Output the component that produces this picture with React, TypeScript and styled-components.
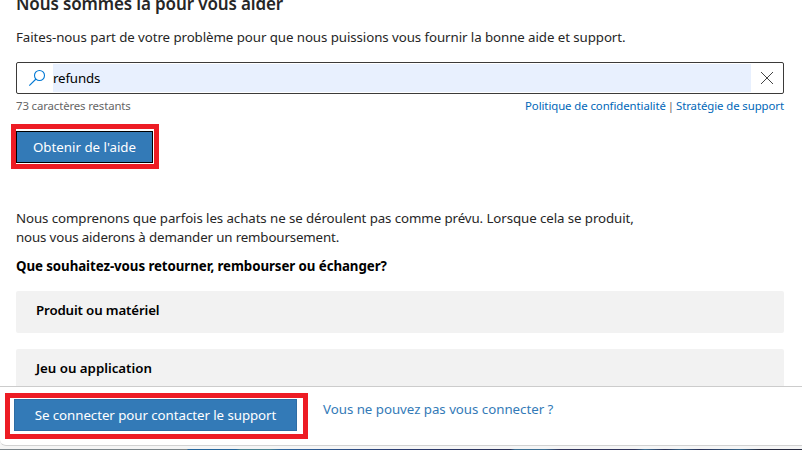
import styled, {createGlobalStyle} from 'styled-components';

const GlobalStyle = createGlobalStyle`
  * {
    box-sizing: border-box;
  }

  body {
    margin: 0;
    background: #fff;
    color: #262626;
    font-family: 'Noto Sans', 'Open Sans', sans-serif;
    font-size: 13.3px;
    overflow: hidden;
  }
`;

const Page = styled.div`
  display: flex;
  flex-direction: column;
  height: 450px;
  overflow: hidden;
  background: #f5f5f5;
`;

const Content = styled.main`
  height: 386px;
  flex: none;
  overflow: hidden;
  padding: 0 18px 0 16px;
  background: #fff;
`;

const Title = styled.h1`
  margin: -8px 0 0;
  height: 24px;
  line-height: 24px;
  font-size: 17px;
  font-weight: 600;
  letter-spacing: -0.13px;
  white-space: nowrap;
`;

const Intro = styled.p`
  margin: 11px 0 15px;
  line-height: 20px;
  letter-spacing: -0.075px;
  white-space: nowrap;
`;

const SearchBox = styled.div`
  display: flex;
  align-items: stretch;
  height: 32px;
  border: 1px solid #3b3a39;
  border-radius: 2px;
`;

const SearchIcon = styled.span`
  display: flex;
  align-items: center;
  width: 36px;
  padding-left: 11px;
`;

const SearchInput = styled.input`
  flex: 1;
  min-width: 0;
  margin: 1px 0;
  padding: 0 0 1px;
  border: 0;
  outline: 0;
  background: #e8f0fe;
  color: #000;
  font: inherit;
  letter-spacing: -0.15px;
`;

const ClearButton = styled.button`
  display: flex;
  align-items: center;
  justify-content: center;
  width: 32px;
  padding: 0;
  border: 0;
  background: none;
`;

const Hint = styled.div`
  display: flex;
  justify-content: space-between;
  height: 24px;
  line-height: 24px;
  font-size: 11.4px;
  letter-spacing: -0.13px;
  color: #666;
  white-space: nowrap;
`;

const HintLinks = styled.span`
  display: flex;
  gap: 2px;
  letter-spacing: -0.085px;
`;

const HintLink = styled.a`
  color: #0067b8;
`;

const Highlight = styled.div<{$inset: string}>`
  width: fit-content;
  padding: ${({$inset}) => $inset};
  border: 5px solid #ed1c24;
  background: #fff;
`;

const Button = styled.button<{$width: number; $focused?: boolean}>`
  display: block;
  width: ${({$width}) => $width}px;
  height: 32px;
  padding: 0;
  border: 1px solid ${({$focused}) => ($focused ? '#000' : '#2e6da4')};
  background: #337ab7;
  color: #fff;
  font: inherit;
  letter-spacing: ${({$focused}) => ($focused ? '0' : '-0.06px')};
  line-height: 28px;
  white-space: nowrap;
`;

const HelpAction = styled.div`
  margin: 6px 0 40px -5px;
`;

const Refunds = styled.p`
  margin: 0;
  line-height: 19px;
  letter-spacing: -0.09px;
  white-space: nowrap;
`;

const RefundsEnd = styled.span`
  letter-spacing: -0.14px;
`;

const Question = styled.h2`
  margin: 9px 0 15px;
  height: 20px;
  line-height: 20px;
  font-size: 13.3px;
  font-weight: 700;
  letter-spacing: -0.075px;
  color: #000;
  white-space: nowrap;
`;

const Choice = styled.div<{$spacing: number}>`
  height: 42px;
  margin-bottom: 16px;
  padding-left: 20px;
  border-radius: 2px;
  background: #f2f2f2;
  color: #000;
  font-weight: 600;
  letter-spacing: ${({$spacing}) => $spacing}px;
  line-height: 38px;
`;

const Footer = styled.footer`
  display: flex;
  align-items: flex-start;
  gap: 15px;
  flex: none;
  height: 60px;
  padding: 6px 0 0 5px;
  border-top: 1px solid #ccc;
  border-bottom: 1px solid #d2d2d2;
  border-bottom-left-radius: 6px;
  background: #fff;
`;

const SignInLink = styled.a`
  margin-top: 6px;
  line-height: 20px;
  letter-spacing: -0.03px;
  color: #337ab7;
  white-space: nowrap;
`;

const Backdrop = styled.div`
  height: 1px;
  margin-top: 3px;
  background: linear-gradient(90deg, #7b858a 0 187px, #24659b 188px 236px, #4b8494 240px 270px, #2f68a0 280px, #2a3a70 400px, #2a3158 510px, #3e6f94 515px 545px, #30345c 560px, #30345c 635px, #3e6f94 645px, #2a3158 665px, #386487 680px, #2a3158 700px, #39668a 740px, #262a40 760px);
`;

const choices = [
  {label: 'Produit ou matériel', spacing: -0.15},
  {label: 'Jeu ou application', spacing: -0.02},
];

const App = () => {
  return (
    <Page>
      <GlobalStyle />
      <Content>
        <Title>Nous sommes là pour vous aider</Title>
        <Intro>Faites-nous part de votre problème pour que nous puissions vous fournir la bonne aide et support.</Intro>
        <SearchBox>
          <SearchIcon>
            <svg width="18" height="18" viewBox="0 0 18 18" fill="none" stroke="#0078d4" strokeWidth="1.1">
              <circle cx="11.5" cy="6.5" r="5" />
              <path d="M8 10 L1.3 16.7" />
            </svg>
          </SearchIcon>
          <SearchInput defaultValue="refunds" />
          <ClearButton>
            <svg width="14" height="14" viewBox="0 0 14 14" fill="none" stroke="#444" strokeWidth="1">
              <path d="M1 1 L13 13 M13 1 L1 13" />
            </svg>
          </ClearButton>
        </SearchBox>
        <Hint>
          <span>73 caractères restants</span>
          <HintLinks>
            <HintLink>Politique de confidentialité</HintLink>
            <span>|</span>
            <HintLink>Stratégie de support</HintLink>
          </HintLinks>
        </Hint>
        <HelpAction>
          <Highlight $inset="2px 1px 1px 0">
            <Button $width={137} $focused>
              {"Obtenir de l'aide"}
            </Button>
          </Highlight>
        </HelpAction>
        <Refunds>
          Nous comprenons que parfois les achats ne se déroulent pas comme prévu. Lorsque cela se produit,
          <br />
          <RefundsEnd>nous vous aiderons à demander un remboursement.</RefundsEnd>
        </Refunds>
        <Question>Que souhaitez-vous retourner, rembourser ou échanger?</Question>
        {choices.map(({label, spacing}) => (
          <Choice key={label} $spacing={spacing}>
            {label}
          </Choice>
        ))}
      </Content>
      <Footer>
        <Highlight $inset="1px 6px 3px 4px">
          <Button $width={283}>Se connecter pour contacter le support</Button>
        </Highlight>
        <SignInLink>Vous ne pouvez pas vous connecter ?</SignInLink>
      </Footer>
      <Backdrop />
    </Page>
  );
};

export default App;
